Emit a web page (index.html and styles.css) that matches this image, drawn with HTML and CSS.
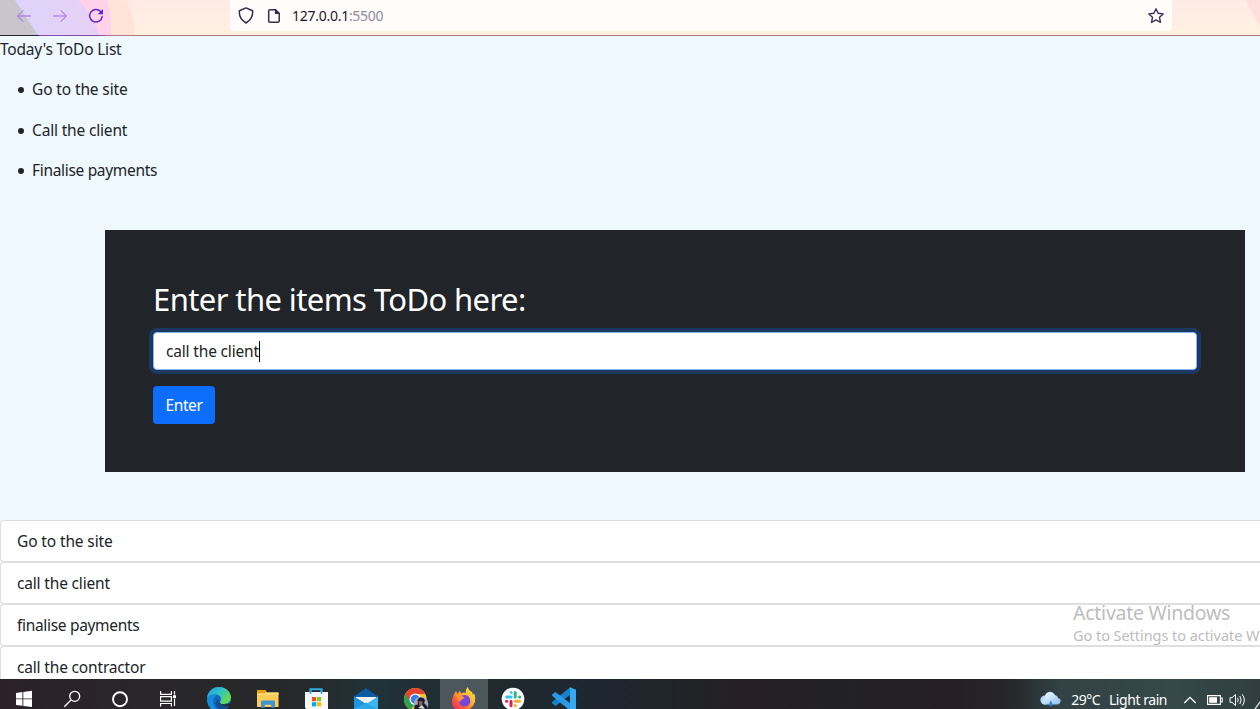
FILE: index.html
```html
<!DOCTYPE html>
<html lang="en">
<head>
<meta charset="utf-8">
<title>ToDo List</title>
<link rel="stylesheet" href="styles.css">
</head>
<body>
<div class="screen">
  <header class="toolbar">
    <svg class="toolbar-art" width="1260" height="35" viewBox="0 0 1260 35">
      <defs>
        <linearGradient id="warm" x1="0" y1="0" x2="0" y2="1"><stop offset="0" stop-color="#ffebe5"/><stop offset="1" stop-color="#fff1e2"/></linearGradient>
        <linearGradient id="lilac" x1="0" y1="0" x2="1" y2="0"><stop offset="0" stop-color="#dcd4fb"/><stop offset="1" stop-color="#e8d0f6"/></linearGradient>
      </defs>
      <rect width="1260" height="35" fill="url(#warm)"/>
      <path d="M0 0H126Q135 18 135 35H0Z" fill="#ffe3d8"/>
      <path d="M0 0H108Q111 18 111 35H0Z" fill="#ffd2ea"/>
      <path d="M0 0H79Q91 15 100 35H0Z" fill="url(#lilac)"/>
      <path d="M0 0H15L38 35H0Z" fill="#c9c5cf"/>
      <path d="M1246 0H1260V25Q1252 14 1246 0Z" fill="#ffdfdc"/>
    </svg>
    <div class="nav">
      <svg width="16" height="16" viewBox="0 0 16 16" fill="none" stroke="#b18bdc" stroke-width="1.3" stroke-linecap="round" stroke-linejoin="round"><path d="M14.5 8H1.6M7 2.6L1.6 8L7 13.4"/></svg>
      <svg width="16" height="16" viewBox="0 0 16 16" fill="none" stroke="#b98de0" stroke-width="1.3" stroke-linecap="round" stroke-linejoin="round"><path d="M1.5 8H14.4M9 2.6L14.4 8L9 13.4"/></svg>
      <svg width="16" height="16" viewBox="0 0 16 16" fill="none" stroke="#5b2bd0" stroke-width="1.5" stroke-linecap="round"><path d="M12.7 3.6A6.3 6.3 0 1 0 14.2 8.6"/><path d="M15 1V6.3H9.7Z" fill="#5b2bd0" stroke="none"/></svg>
    </div>
    <div class="urlbar">
      <svg width="16" height="18" viewBox="0 0 16 18" fill="none" stroke="#37294f" stroke-width="1.5" stroke-linejoin="round"><path d="M8 .9L14.6 3.8Q15.4 11.5 8 16Q.6 11.5 1.4 3.8Z"/></svg>
      <svg class="page-icon" width="14" height="16" viewBox="0 0 14 16"><path d="M3 1.7H8.6L12.2 5.3V12.9Q12.2 14.3 10.8 14.3H3Q1.7 14.3 1.7 12.9V3Q1.7 1.7 3 1.7Z" fill="none" stroke="#37294f" stroke-width="1.5"/><path d="M7.9 1V6H13Z" fill="#37294f"/></svg>
      <span class="address">127.0.0.1<span class="port">:5500</span></span>
      <svg class="star" width="18" height="18" viewBox="0 0 18 18" fill="none" stroke="#3d2f59" stroke-width="1.4" stroke-linejoin="round"><path d="M9 1.8L11.1 6.3L16.2 6.9L12.5 10.3L13.5 15.4L9 12.9L4.5 15.4L5.5 10.3L1.8 6.9L6.9 6.3Z"/></svg>
    </div>
  </header>

  <main class="page">
    <p class="title">Today's ToDo List</p>
    <ul class="tasks">
      <li class="task t-site">Go to the site</li>
      <li class="task t-call">Call the client</li>
      <li class="task t-pay">Finalise payments</li>
    </ul>
    <section class="entry">
      <h2 class="entry-heading">Enter the items ToDo here:</h2>
      <div class="field"><span class="field-text">call the client</span><span class="caret"></span></div>
      <button class="submit">Enter</button>
    </section>
    <div class="items">
      <div class="item t-site">Go to the site</div>
      <div class="item t-call">call the client</div>
      <div class="item t-pay">finalise payments</div>
      <div class="item t-con">call the contractor</div>
    </div>
  </main>

  <div class="watermark">
    <div class="wm-title">Activate Windows</div>
    <div class="wm-text">Go to Settings to activate W</div>
  </div>

  <footer class="taskbar">
    <div class="apps">
      <div class="app"><svg width="48" height="30" viewBox="0 0 48 30" fill="#fff"><path d="M16 14L22.4 13V19.4H16ZM23.3 12.9L32 11.8V19.4H23.3ZM16 20.3H22.4V26.8L16 26ZM23.3 20.3H32V28L23.3 26.9Z"/></svg></div>
      <div class="app"><svg width="48" height="30" viewBox="0 0 48 30" fill="none" stroke="#fff" stroke-width="1.3"><circle cx="26.7" cy="17.3" r="5"/><path d="M23 21L16.3 27.7"/></svg></div>
      <div class="app"><svg width="48" height="30" viewBox="0 0 48 30" fill="none" stroke="#fff" stroke-width="1.9"><circle cx="24" cy="20.2" r="7"/></svg></div>
      <div class="app"><svg width="48" height="30" viewBox="0 0 48 30" fill="none" stroke="#fff" stroke-width="1.2"><path d="M16.6 12V15.3H27.4V12M16.6 27.5V24.5H27.4V27.5M16.6 17.6H27.4V22.2H16.6ZM30.5 12V15.5M30.5 19.5V27"/><path d="M29 16.2H32V19H29Z" fill="#fff" stroke="none"/></svg></div>
      <div class="app"><svg width="48" height="30" viewBox="0 0 48 30"><defs><linearGradient id="eg" x1="0" y1="0" x2="1" y2=".5"><stop offset="0" stop-color="#2398dc"/><stop offset=".55" stop-color="#2fc4c9"/><stop offset="1" stop-color="#62d84d"/></linearGradient></defs><circle cx="27" cy="20" r="12" fill="#1267c1"/><path d="M15 19C16 11 22 8 27 8C35 8 39 14 39 18.5C39 23 35 25 31 25C28 25 27.5 23.5 28.5 22C30 18 27 15.6 23.5 15.6C19 15.6 16 18 15 19Z" fill="url(#eg)"/><path d="M15 20C16 16 22 14.6 25 16.5C20 18 20 25 24.5 30H19Q15 26 15 20Z" fill="#168ddb"/><path d="M27 20Q25 23 28 26Q32 29 38 25Q35 29 33 30H27Q20 23 27 20Z" fill="#104c91"/><path d="M28.4 18.6C26 19.6 26 23 29 25C33 26 36 25 38 24V26C33 29 27 26 26.5 22Q26.5 19 28.4 18.6Z" fill="#232b2e"/></svg></div>
      <div class="app"><svg width="48" height="30" viewBox="0 0 48 30"><path d="M17 11H25L27 13.5H38.5V28H17Z" fill="#ffcd55"/><path d="M17 11H25.3L26.4 12.5L24.8 14H17Z" fill="#e6a012"/><path d="M17 15H25L27 13.5H38.5V16H17Z" fill="#ffd978"/><path d="M21 28.8V22.4Q21 21.4 22 21.4H34Q35 21.4 35 22.4V28.8H31.2V25.8H24.8V28.8Z" fill="#3c95d5"/></svg></div>
      <div class="app"><svg width="48" height="30" viewBox="0 0 48 30"><path d="M22.5 14V10.2H33.5V14" fill="none" stroke="#2daae1" stroke-width="2"/><path d="M17 13H40V30H18.5Q17 29.5 17 28Z" fill="#f7f7f7"/><path d="M22.5 10V15M33.5 10V15" stroke="#2daae1" stroke-width="1.6"/><path d="M24 18H28.2V22.2H24Z" fill="#f1511b"/><path d="M29 18H33.2V22.2H29Z" fill="#80cc28"/><path d="M24 23.2H28.2V27.4H24Z" fill="#00adef"/><path d="M29 23.2H33.2V27.4H29Z" fill="#fbbc09"/></svg></div>
      <div class="app"><svg width="48" height="30" viewBox="0 0 48 30"><path d="M18 17.5L30 9L42 17.5V22H18Z" fill="#0c59a4"/><path d="M20 18H40V26H20Z" fill="#f3f3f3"/><path d="M18 17.5L30 25L42 17.5V30H18Z" fill="#39b9ef"/><path d="M18 17.5L38 30H18Z" fill="#1f91dd"/><path d="M18 30L30 23.5L42 30Z" fill="#2ca7e7"/></svg></div>
      <div class="app"><svg width="48" height="30" viewBox="0 0 48 30"><circle cx="31.3" cy="20.3" r="11.3" fill="#f9c72d"/><path d="M21.2 15.2A11.3 11.3 0 0 1 41.2 15H31V20L25 23Z" fill="#e64234"/><path d="M21.2 15.2A11.3 11.3 0 0 0 27 30.7L31 25L26 22Z" fill="#2ba24c"/><circle cx="31.3" cy="20.3" r="5.8" fill="#fff"/><circle cx="31.3" cy="20.3" r="4.5" fill="#397ee8"/><circle cx="37" cy="25" r="7.3" fill="#a5a6bd"/><path d="M30 30L31 26L34 25.5L33.5 21Q35 17.5 39 19Q42 20.5 40 24L43 27V30Z" fill="#171a27"/><path d="M34.5 22L38.8 22.6L38 26.5L35.5 27Z" fill="#936557"/><path d="M34 29L38 26L41 30Z" fill="#d8d8e0"/></svg></div>
      <div class="app active"><svg width="48" height="30" viewBox="0 0 48 30"><defs><linearGradient id="ff" x1="1" y1="0" x2="0" y2="1"><stop offset="0" stop-color="#fff04a"/><stop offset=".45" stop-color="#ffac2f"/><stop offset=".75" stop-color="#ff533e"/><stop offset="1" stop-color="#ed2671"/></linearGradient></defs><path d="M15 15L17 12L18.5 15L21 11.8L22 14.5Q25 13 27 14Q26 10.5 29 8Q29.5 11.5 33 13L34 16L35 14Q37 18 36 23Q34 28 31 30H16Q10.5 25 15 15Z" transform="translate(-1 0)" fill="url(#ff)"/><path d="M19 19Q23 14.5 28 17Q31 20 30 24Q27 29 22 27Q18 25 19 19Z" fill="#7746df"/><path d="M15 15L18 16L23 17.5L24.5 19L21 21L20 23Q18 21 17.5 19Z" fill="#ff9633"/></svg></div>
      <div class="app"><svg width="48" height="30" viewBox="0 0 48 30"><circle cx="25" cy="20" r="11.3" fill="#fff"/><g fill="none" stroke-width="3" stroke-linecap="round"><path d="M23.2 13.4V13.6M18.7 18H23.2" stroke="#36c5f0"/><path d="M27.2 13.5V18M31.6 18H31.8" stroke="#2eb67d"/><path d="M27.2 22.3H31.7M27.2 26.6V26.8" stroke="#ecb22e"/><path d="M23 22.3V26.8M18.5 22.3H18.7" stroke="#e01e5a"/></g></svg></div>
      <div class="app"><svg width="48" height="30" viewBox="0 0 48 30"><path d="M34 8.2L40 10.8V30H34Z" fill="#35a9f3"/><path d="M34 8.2V16L19.5 27L16.2 24.5Q15.6 23.5 16.4 22.7Z" fill="#1681ca"/><path d="M16.2 15.5L19.3 13L34 24V30H32L16.4 17Q15.7 16.2 16.2 15.5Z" fill="#289be8"/></svg></div>
    </div>
    <div class="tray">
      <svg class="cloud" width="22" height="17" viewBox="0 0 22 17"><defs><linearGradient id="cl" x1="0" y1="0" x2="1" y2="1"><stop offset="0" stop-color="#edf7ff"/><stop offset="1" stop-color="#8abdf0"/></linearGradient></defs><circle cx="5" cy="9" r="4.6" fill="#b4dcfb"/><circle cx="10" cy="6" r="5.2" fill="#d6ecff"/><path d="M3 13Q1 7 7 8Q9 2 15 4Q18 5 18 7Q22 8 20 12Q19 13.6 17 13.6H4Z" fill="url(#cl)"/><path d="M10.8 9.5Q8.8 12.5 9 14Q10.8 16.8 12.6 14Q12.8 12.5 10.8 9.5Z" fill="#2585e6"/></svg>
      <span class="temp">29°C</span>
      <span class="rain">Light rain</span>
      <svg class="chevron" width="14" height="8" viewBox="0 0 14 8" fill="none" stroke="#fff" stroke-width="1.3"><path d="M1.3 7L7 1.3L12.7 7"/></svg>
      <svg class="battery" width="16" height="10" viewBox="0 0 16 10"><path d="M.6.6H13.4V9.4H.6ZM14 3H15.2V7H14" fill="none" stroke="#fff" stroke-width="1.1"/><path d="M2.2 2.2H10V7.8H2.2Z" fill="#fff"/></svg>
      <svg class="speaker" width="18" height="14" viewBox="0 0 18 14" fill="none" stroke="#fff" stroke-width="1"><path d="M1 4.7H3L6.5 1.5V12.5L3 9.3H1ZM8.5 4.8Q10 7 8.5 9.2M10.8 3Q13.5 7 10.8 11M13.2 1.3Q17.5 7 13.2 12.7"/></svg>
    </div>
    <svg class="cursor" width="6" height="8" viewBox="0 0 6 8"><path d="M1 8L6 1" stroke="#ddd" stroke-width="1.3"/></svg>
  </footer>
</div>
</body>
</html>
```
FILE: styles.css
```css
* { box-sizing: border-box; }
body {
  margin: 0;
  font-family: "Noto Sans", "Open Sans", sans-serif;
  font-size: 15.5px;
  line-height: 24px;
  color: #212529;
}
svg { display: block; flex: none; }
.screen {
  position: relative;
  width: 1260px;
  height: 709px;
  overflow: hidden;
  display: flex;
  flex-direction: column;
  background: #f0f8ff;
}

.toolbar {
  position: relative;
  flex: none;
  height: 36px;
  display: flex;
  border-bottom: 1px solid #ad8578;
  border-image: linear-gradient(90deg, #262033 0 38px, #8050a8 40px 98px, #bd7591 110px, #ad8578 140px) 0 0 1 0;
}
.toolbar-art { position: absolute; left: 0; top: 0; }
.nav {
  position: relative;
  width: 230px;
  display: flex;
  gap: 20px;
  padding: 8px 0 0 16px;
}
.urlbar {
  position: relative;
  width: 942px;
  height: 31px;
  display: flex;
  align-items: center;
  padding: 0 7px 0 8px;
  background: #fffcfa;
  border-radius: 0 0 4px 4px;
}
.page-icon { margin-left: 13px; }
.address { margin-left: 11px; font-size: 14px; letter-spacing: -0.27px; color: #1f1534; white-space: nowrap; }
.port { color: #8f8a9d; }
.star { margin-left: auto; }

.page { flex: 1; min-height: 0; padding-top: 1px; overflow: hidden; white-space: nowrap; }
.title { margin: 0; letter-spacing: -0.2px; }
.tasks {
  margin: 16px 0 48px;
  padding-left: 18px;
  display: grid;
  row-gap: 16.5px;
  list-style: none;
}
.task { display: flex; align-items: center; gap: 8px; }
.task::before {
  content: "";
  width: 6px;
  height: 6px;
  margin-top: 2px;
  border-radius: 50%;
  background: #212529;
}
.entry {
  width: 1140px;
  height: 242px;
  margin: 0 0 48px 105px;
  padding: 48px;
  background: #212529;
}
.entry-heading {
  margin: 0 0 14px;
  padding-top: 2px;
  font-size: 31px;
  font-weight: 400;
  line-height: 38px;
  letter-spacing: -0.6px;
  color: #fff;
}
.field {
  height: 38px;
  display: flex;
  align-items: center;
  padding: 0 12px;
  background: #fff;
  border: 1px solid #86b7fe;
  border-radius: 4px;
  box-shadow: 0 0 0 4px #1c3860;
}
.caret { width: 1px; height: 21px; background: #000; }
.submit {
  display: block;
  width: 62px;
  height: 38px;
  margin-top: 16px;
  padding: 0;
  border: 0;
  border-radius: 4px;
  background: #0d6efd;
  color: #fff;
  font: inherit;
  letter-spacing: -0.4px;
}
.item {
  height: 42px;
  padding: 8px 16px;
  background: #fff;
  border: 1px solid #dfdfdf;
  border-right: 0;
  border-radius: 4px 0 0 4px;
}

.watermark { position: absolute; left: 1073px; top: 600px; color: #bdbdbd; white-space: nowrap; }
.wm-title { font-size: 19.5px; line-height: 26px; letter-spacing: -0.25px; }
.wm-text { font-size: 14.5px; line-height: 19px; letter-spacing: -0.05px; }

.taskbar {
  position: relative;
  flex: none;
  height: 30px;
  display: flex;
  justify-content: space-between;
  overflow: hidden;
  background: linear-gradient(90deg, #2c2128 0, #282628 140px, #272829 290px, #203238 370px, #20292e 500px, #1e2631 600px, #212427 690px, #251f25 750px, #222226 830px, #251f24 950px, #262729 1010px, #334244 1060px, #36484a 1170px, #303e40 1260px);
}
.apps { display: flex; }
.app { width: 48px; height: 30px; }
.active { margin-left: 8px; background: #4b575c; }
.tray {
  display: flex;
  align-items: center;
  padding: 11px 13px 0 0;
  color: #fff;
  font-size: 14px;
  line-height: 19px;
  white-space: nowrap;
}
.temp { margin-left: 9px; letter-spacing: -0.55px; }
.rain { margin-left: 9px; letter-spacing: -0.45px; }
.chevron { margin-left: 16px; }
.battery { margin-left: 10px; }
.speaker { margin-left: 6px; }
.cursor { position: absolute; right: 0; bottom: 0; }

.t-site { letter-spacing: -0.13px; }
.t-call, .t-con, .field-text { letter-spacing: -0.17px; }
.t-pay { letter-spacing: -0.32px; }
```
